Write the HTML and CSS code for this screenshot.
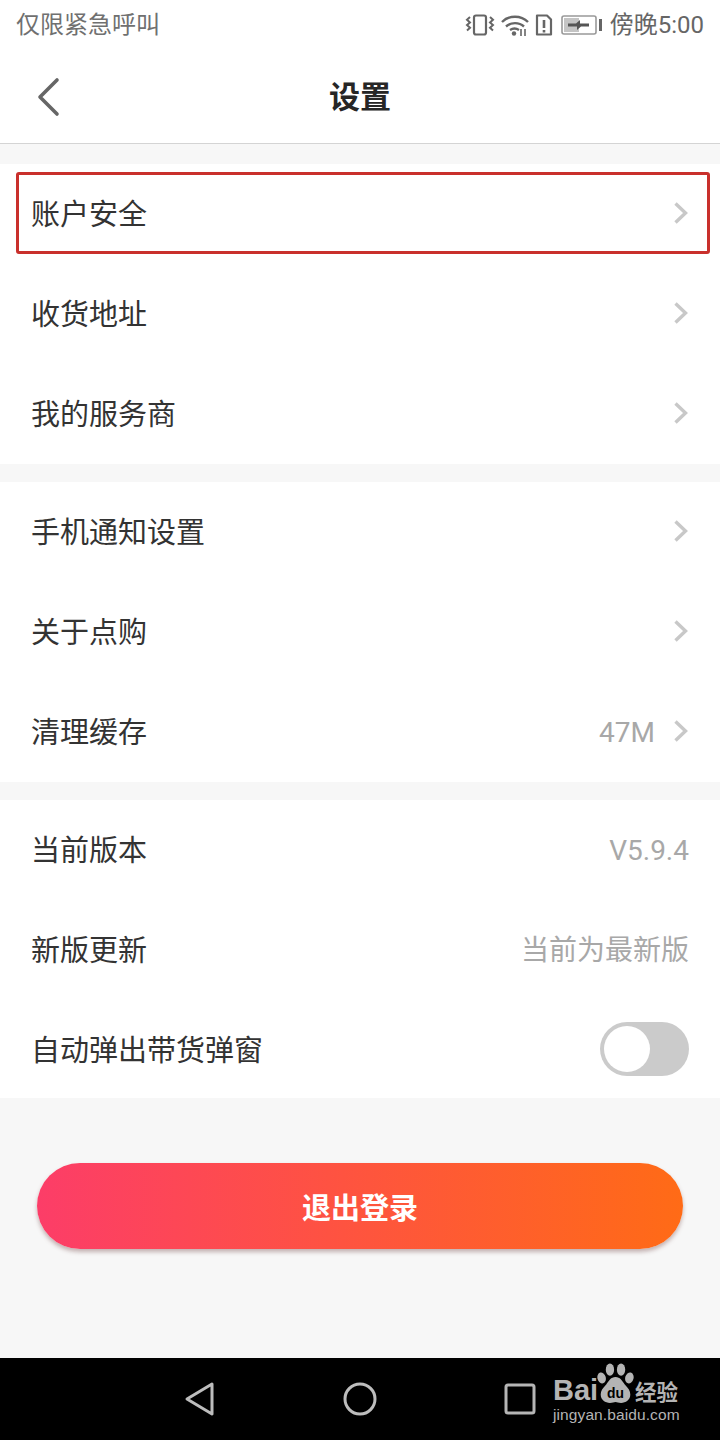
FILE: index.html
```html
<!DOCTYPE html>
<html lang="zh">
<head>
<meta charset="utf-8">
<title>设置</title>
<link rel="stylesheet" href="styles.css">
</head>
<body>
<div class="screen">
  <div class="status">
    <span class="status-left">仅限紧急呼叫</span>
    <div class="status-right">
      <svg class="ic-vib" viewBox="0 0 30 24" width="30" height="24"><rect x="9" y="2.500" width="12" height="19" rx="2" fill="none" stroke="#666" stroke-width="2.200"/><path d="M5 4l-3 2.700 3 2.700-3 2.700 3 2.700-3 2.700M25 4l3 2.700-3 2.700 3 2.700-3 2.700 3 2.700" fill="none" stroke="#666" stroke-width="2"/></svg>
      <svg class="ic-wifi" viewBox="0 0 28 24" width="28" height="24"><path d="M1 9C8 2 20 2 27 9M5 13.500C10 9 18 9 23 13.500M9 17C12 15 15 15 18 17" fill="none" stroke="#666" stroke-width="2.400"/><circle cx="13" cy="20.500" r="2.200" fill="#666"/><path d="M20 16v7M24 16v7" stroke="#666" stroke-width="1.600"/></svg>
      <svg class="ic-sim" viewBox="0 0 18 24" width="18" height="24"><path d="M2 2.500h10l4 4v15H2z" fill="none" stroke="#666" stroke-width="2.200" stroke-linejoin="round"/><path d="M9 7v8M9 17v2.500" stroke="#666" stroke-width="2.600"/></svg>
      <svg class="ic-bat" viewBox="0 0 42 24" width="42" height="24"><rect x="1" y="3" width="34" height="18" rx="2" fill="#fff" stroke="#999" stroke-width="1.600"/><rect x="3" y="5" width="15" height="14" fill="#c4c4c4"/><path d="M7 10.500h8l4-3.500v3.500h9v3h-8l-4 3.500v-3.500H7z" fill="#555"/><rect x="38" y="6" width="3" height="12" fill="#666"/></svg>
      <span class="clock">傍晚5:00</span>
    </div>
  </div>

  <header class="header">
    <svg class="back" viewBox="0 0 24 40" width="24" height="40"><path d="M21 3L4 20l17 17" fill="none" stroke="#666" stroke-width="3.600" stroke-linecap="round" stroke-linejoin="round"/></svg>
    <h1 class="title">设置</h1>
  </header>

  <section class="group">
    <div class="row">
      <span class="label">账户安全</span>
      <svg class="chev" viewBox="0 0 16 24" width="16" height="24"><path d="M2.500 2.500l10 9.500-10 9.500" fill="none" stroke="#c8c8c8" stroke-width="3.400"/></svg>
      <div class="highlight"></div>
    </div>
    <div class="row">
      <span class="label">收货地址</span>
      <svg class="chev" viewBox="0 0 16 24" width="16" height="24"><path d="M2.500 2.500l10 9.500-10 9.500" fill="none" stroke="#c8c8c8" stroke-width="3.400"/></svg>
    </div>
    <div class="row">
      <span class="label">我的服务商</span>
      <svg class="chev" viewBox="0 0 16 24" width="16" height="24"><path d="M2.500 2.500l10 9.500-10 9.500" fill="none" stroke="#c8c8c8" stroke-width="3.400"/></svg>
    </div>
  </section>

  <section class="group">
    <div class="row">
      <span class="label">手机通知设置</span>
      <svg class="chev" viewBox="0 0 16 24" width="16" height="24"><path d="M2.500 2.500l10 9.500-10 9.500" fill="none" stroke="#c8c8c8" stroke-width="3.400"/></svg>
    </div>
    <div class="row">
      <span class="label">关于点购</span>
      <svg class="chev" viewBox="0 0 16 24" width="16" height="24"><path d="M2.500 2.500l10 9.500-10 9.500" fill="none" stroke="#c8c8c8" stroke-width="3.400"/></svg>
    </div>
    <div class="row">
      <span class="label">清理缓存</span>
      <span class="value value-gap">47M</span>
      <svg class="chev" viewBox="0 0 16 24" width="16" height="24"><path d="M2.500 2.500l10 9.500-10 9.500" fill="none" stroke="#c8c8c8" stroke-width="3.400"/></svg>
    </div>
  </section>

  <section class="group">
    <div class="row">
      <span class="label">当前版本</span>
      <span class="value">V5.9.4</span>
    </div>
    <div class="row">
      <span class="label">新版更新</span>
      <span class="value">当前为最新版</span>
    </div>
    <div class="row row-short">
      <span class="label">自动弹出带货弹窗</span>
      <div class="toggle"><div class="knob"></div></div>
    </div>
  </section>

  <main class="footer-area">
    <button class="logout" type="button">退出登录</button>
  </main>

  <nav class="navbar">
    <svg class="nav-back" viewBox="0 0 32 36" width="32" height="36"><path d="M28 3L3 18l25 15z" fill="none" stroke="#bdbdbd" stroke-width="3" stroke-linejoin="round"/></svg>
    <svg class="nav-home" viewBox="0 0 34 34" width="34" height="34"><circle cx="17" cy="17" r="15" fill="none" stroke="#bdbdbd" stroke-width="3"/></svg>
    <svg class="nav-recent" viewBox="0 0 32 32" width="32" height="32"><rect x="2" y="2" width="28" height="28" rx="2" fill="none" stroke="#b5b5b5" stroke-width="3"/></svg>
    <div class="watermark">
      <div class="wm-top">
        <span class="wm-bai">Bai</span>
        <svg class="wm-paw" viewBox="0 0 40 44" width="37" height="41"><ellipse cx="14" cy="7" rx="4.500" ry="6.500" fill="#b4b4b4"/><ellipse cx="26" cy="7" rx="4.500" ry="6.500" fill="#b4b4b4"/><ellipse cx="5" cy="16" rx="4.500" ry="6" fill="#b4b4b4" transform="rotate(-15 5 16)"/><ellipse cx="35" cy="16" rx="4.500" ry="6" fill="#b4b4b4" transform="rotate(15 35 16)"/><path d="M20 15c5 0 7 4 10 8 4 4 6 7 6 11 0 6-5 9-10 9-3 0-4-1-6-1s-3 1-6 1c-5 0-10-3-10-9 0-4 2-7 6-11 3-4 5-8 10-8z" fill="#b4b4b4"/><text x="20" y="38" class="wm-du">du</text></svg>
        <span class="wm-jy">经验</span>
      </div>
      <div class="wm-url">jingyan.baidu.com</div>
    </div>
  </nav>
</div>
</body>
</html>
```

FILE: styles.css
```css
* { box-sizing: border-box; }
html, body { margin: 0; padding: 0; }
body {
  font-family: "Noto Sans CJK SC", "Liberation Sans", sans-serif;
  background: #f7f7f7;
}
.screen {
  width: 720px;
  height: 1440px;
  display: flex;
  flex-direction: column;
  position: relative;
  overflow: hidden;
}
.status {
  height: 50px;
  background: #fff;
  display: flex;
  align-items: center;
  justify-content: space-between;
  padding: 0 16px;
  color: #707070;
  font-size: 24px;
}
.status-left { line-height: 46px; margin-bottom: 4px; }
.status-right {
  display: flex;
  align-items: center;
}
.ic-vib { margin-right: 6px; }
.ic-wifi { margin-right: 6px; }
.ic-sim { margin-right: 8px; }
.ic-bat { margin-right: 7px; }
.clock {
  font-family: "Roboto", "Noto Sans CJK SC", sans-serif;
  font-size: 24px;
  line-height: 50px;
  color: #666;
}
.header {
  height: 94px;
  background: #fff;
  border-bottom: 1px solid #d4d4d4;
  display: flex;
  align-items: center;
  justify-content: center;
  position: relative;
}
.back {
  position: absolute;
  left: 36px;
  top: 27px;
}
.title {
  margin: 0 0 4px;
  font-size: 31px;
  font-weight: 700;
  color: #262626;
  line-height: 40px;
}
.group {
  margin-top: 20px;
  background: #fff;
}
.group + .group { margin-top: 18px; }
.row {
  height: 100px;
  display: flex;
  align-items: center;
  padding: 0 31px;
  position: relative;
}
.row-short { height: 98px; }
.label {
  font-size: 29px;
  color: #333;
  line-height: 40px;
  flex: 1;
  margin-bottom: 4px;
}
.row-short .label { margin-bottom: 2px; }
.value {
  font-family: "Roboto", "Noto Sans CJK SC", sans-serif;
  font-size: 28px;
  color: #a8a8a8;
  line-height: 40px;
  margin-top: 2px;
}
.value-gap { margin-right: 18px; }
.chev { flex: none; margin-bottom: 2px; }
.highlight {
  position: absolute;
  left: 16px;
  top: 8px;
  width: 694px;
  height: 82px;
  border: 3px solid #c9302c;
  border-radius: 3px;
}
.toggle {
  width: 89px;
  height: 54px;
  background: #cbcbcb;
  border-radius: 27px;
  padding: 4px;
}
.knob {
  width: 46px;
  height: 46px;
  border-radius: 50%;
  background: #fff;
}
.footer-area {
  flex: 1;
  padding: 65px 37px 0;
  background: #f7f7f7;
}
.logout {
  display: block;
  width: 646px;
  height: 86px;
  border: 0;
  padding: 0;
  border-radius: 43px;
  background: linear-gradient(90deg, #fc3d68 0%, #fe5242 45%, #ff6b16 100%);
  box-shadow: 0 3px 4px rgba(130, 90, 90, 0.45);
  color: #fff;
  font-family: inherit;
  font-size: 29px;
  font-weight: 700;
}
.navbar {
  height: 82px;
  background: #000;
  position: relative;
  flex: none;
}
.nav-back { position: absolute; left: 184px; top: 23px; }
.nav-home { position: absolute; left: 343px; top: 24px; }
.nav-recent { position: absolute; left: 504px; top: 25px; }
.watermark {
  position: absolute;
  left: 553px;
  top: 5px;
  color: #b4b4b4;
}
.wm-top {
  display: flex;
  align-items: flex-end;
  height: 41px;
}
.wm-bai {
  font-family: "Liberation Sans", sans-serif;
  font-weight: 700;
  font-size: 29px;
  line-height: 28px;
  width: 44px;
}
.wm-paw { flex: none; }
.wm-du {
  font-family: "Liberation Sans", sans-serif;
  font-size: 15px;
  font-weight: 700;
  fill: #000;
  text-anchor: middle;
}
.wm-jy {
  font-size: 21.500px;
  font-weight: 700;
  line-height: 26px;
  margin-left: 1px;
  white-space: nowrap;
}
.wm-url {
  font-family: "Liberation Sans", sans-serif;
  font-size: 15.500px;
  line-height: 20px;
  letter-spacing: 0.100px;
  margin-top: 1px;
  white-space: nowrap;
}
```
